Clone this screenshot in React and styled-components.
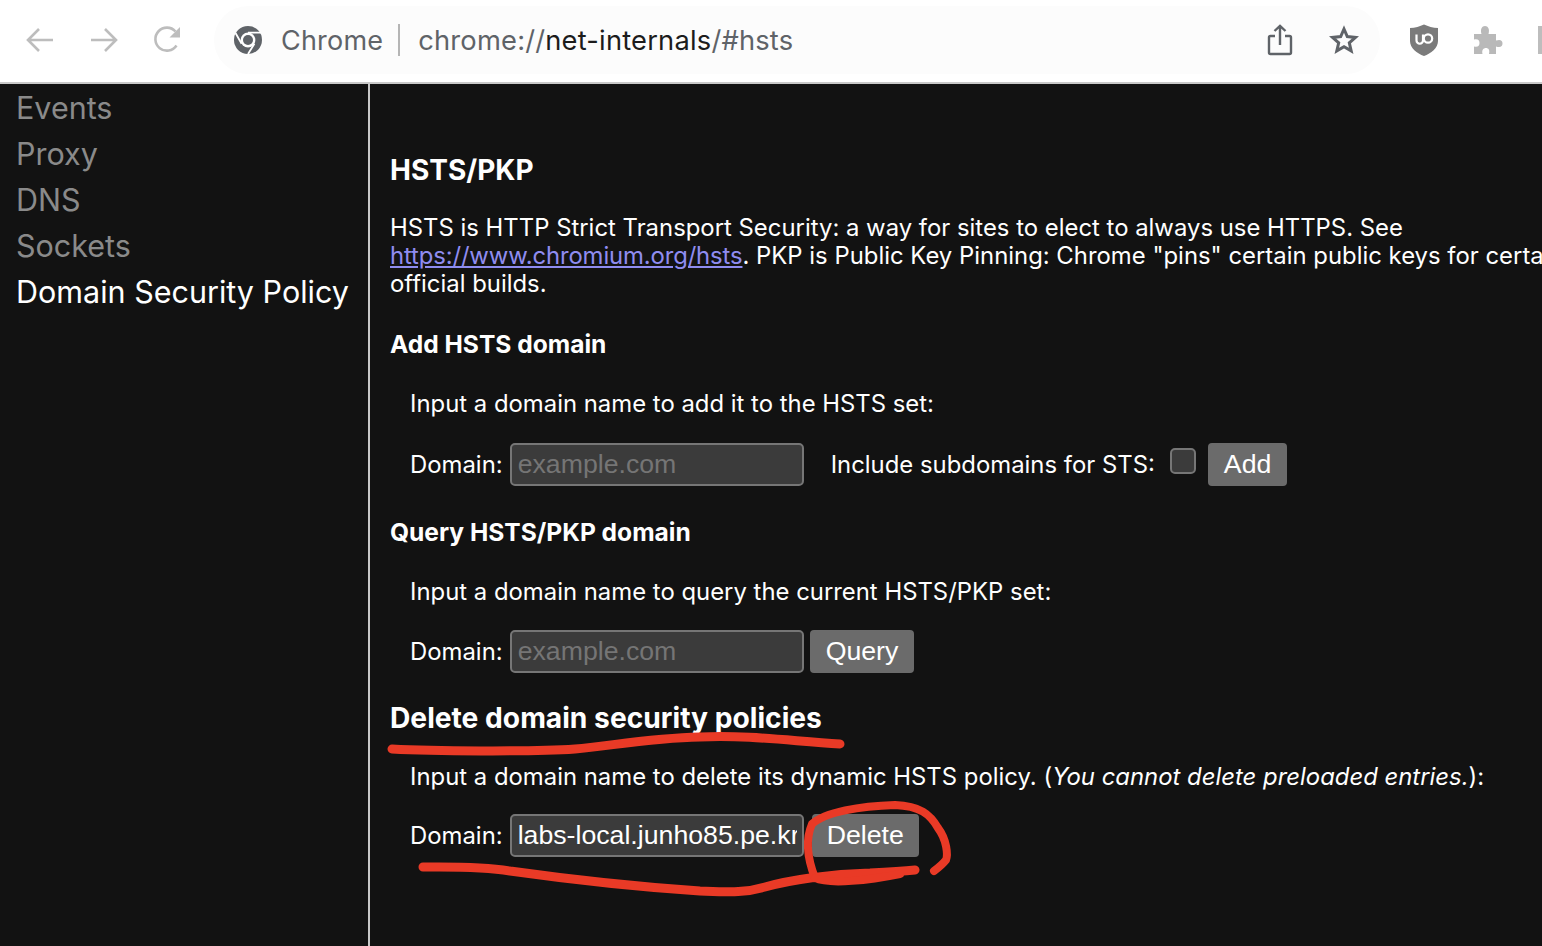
import React from 'react';
import styled, { createGlobalStyle } from 'styled-components';

const GlobalStyle = createGlobalStyle`
  html, body {
    margin: 0;
    padding: 0;
    height: 100%;
    overflow: hidden;
    background: #121212;
  }
`;

const Page = styled.div`
  position: relative;
  height: 946px;
  overflow: hidden;
  display: flex;
  flex-direction: column;
  font-family: Inter, "Liberation Sans", sans-serif;
  color: #fff;
`;

const Toolbar = styled.div`
  height: 84px;
  box-sizing: border-box;
  flex-shrink: 0;
  background: #fff;
  border-bottom: 2px solid #c9c9c9;
  display: flex;
  align-items: center;
  padding: 0 0 2px 24px;
  overflow: hidden;
`;

const NavButton = styled.div`
  width: 32px;
  height: 32px;
  margin-right: 32px;
  display: flex;
  align-items: center;
  justify-content: center;
  flex-shrink: 0;
`;

const Omnibox = styled.div`
  width: 1166px;
  height: 68px;
  margin-left: -2px;
  border-radius: 34px;
  background: #fcfcfc;
  display: flex;
  align-items: center;
  padding-left: 19px;
  box-sizing: border-box;
  flex-shrink: 0;
`;

const SiteName = styled.span`
  font-size: 27px;
  color: #5f6368;
  margin-left: 18px;
  letter-spacing: 0.2px;
`;

const Divider = styled.span`
  width: 2px;
  height: 32px;
  background: #b5b5b5;
  margin: 0 18px 0 15px;
`;

const Url = styled.span`
  font-size: 27.3px;
  color: #5f6368;
  letter-spacing: 0.2px;
  white-space: nowrap;
`;

const UrlStrong = styled.span`
  color: #1c1c1c;
`;

const OmniActions = styled.div`
  margin-left: auto;
  display: flex;
  align-items: center;
  gap: 36px;
  padding-right: 21px;
`;

const Extensions = styled.div`
  display: flex;
  align-items: center;
  gap: 35px;
  margin-left: 30px;
  flex-shrink: 0;
`;

const Main = styled.div`
  flex: 1;
  display: flex;
  min-height: 0;
`;

const Sidebar = styled.nav`
  width: 370px;
  flex-shrink: 0;
  box-sizing: border-box;
  border-right: 2px solid #c8c8c8;
  padding: 1px 0 0 16px;
`;

const NavItem = styled.div`
  font-size: 30.5px;
  line-height: 46px;
  color: ${props => (props.$active ? '#ffffff' : '#8a8a8a')};
  white-space: nowrap;
`;

const Content = styled.main`
  flex: 1;
  padding: 69px 0 0 20px;
  white-space: nowrap;
  min-width: 0;
`;

const Title = styled.h2`
  font-size: 28px;
  line-height: 34px;
  font-weight: 700;
  margin: 0 0 27px;
`;

const Para = styled.p`
  font-size: 23.88px;
  line-height: 28px;
  margin: 0 0 31px;
`;

const Link = styled.a`
  color: #8f8cf0;
  letter-spacing: -0.14px;
  text-decoration: underline;
`;

const SectionTitle = styled.h3`
  font-size: 24.55px;
  line-height: 30px;
  font-weight: 700;
  margin: 0;
`;

const BigSectionTitle = styled.h3`
  font-size: 28.2px;
  line-height: 34px;
  font-weight: 700;
  margin: 0;
`;

const Prompt = styled.div`
  font-size: 23.88px;
  line-height: 28px;
  margin: ${props => props.$top}px 0 0 20px;
`;

const FormRow = styled.div`
  display: flex;
  align-items: center;
  height: 43px;
  margin: ${props => props.$top}px 0 ${props => props.$bottom}px 20px;
`;

const Label = styled.span`
  font-size: 23.88px;
  margin-right: 7px;
`;

const Input = styled.div`
  width: 294px;
  height: 43px;
  box-sizing: border-box;
  border: 2px solid #767676;
  border-radius: 5px;
  background: #3b3b3b;
  padding: 0 5px 0 6px;
  font-size: 26.7px;
  line-height: 38px;
  color: ${props => (props.$filled ? '#ffffff' : '#757575')};
  font-family: "Liberation Sans", Arial, sans-serif;
`;

const InputValue = styled.div`
  overflow: hidden;
  white-space: nowrap;
`;

const Checkbox = styled.span`
  width: 26px;
  height: 26px;
  box-sizing: border-box;
  border: 2px solid #767676;
  border-radius: 5px;
  background: #3b3b3b;
  margin: -8px 0 0 15px;
`;

const Button = styled.button`
  height: 43px;
  box-sizing: border-box;
  border: none;
  border-radius: 4px;
  background: #6b6b6b;
  color: #fff;
  font-family: "Liberation Sans", Arial, sans-serif;
  font-size: 26.7px;
  padding: 0 ${props => props.$pad || 16}px;
  margin-left: ${props => props.$left}px;
`;

const IncludeLabel = styled.span`
  font-size: 23.88px;
  margin-left: 27px;
`;

const Annotations = styled.svg`
  position: absolute;
  left: 0;
  top: 0;
  pointer-events: none;
`;

const Ink = styled.path`
  fill: none;
  stroke: #e93a26;
  stroke-width: ${props => props.$width || 9};
  stroke-linecap: round;
  stroke-linejoin: round;
`;

const Back = () => (
  <svg width="30" height="28" viewBox="0 0 30 28" fill="none" stroke="#bdbdbd" strokeWidth="2.6">
    <path d="M28 14H3M14 3 3 14l11 11" />
  </svg>
);

const Forward = () => (
  <svg width="30" height="28" viewBox="0 0 30 28" fill="none" stroke="#bdbdbd" strokeWidth="2.6">
    <path d="M2 14h25M16 3l11 11-11 11" />
  </svg>
);

const Reload = () => (
  <svg width="30" height="30" viewBox="0 0 30 30" fill="none">
    <path d="M23.5 20.5A11.5 11.5 0 1 1 22.5 6.5" stroke="#bdbdbd" strokeWidth="2.6" />
    <path d="M27 2v10.5H16.5z" fill="#bdbdbd" />
  </svg>
);

const ChromeLogo = () => (
  <svg width="30" height="30" viewBox="0 0 30 30">
    <circle cx="15" cy="15" r="14" fill="#5f6368" />
    <circle cx="15" cy="15" r="7.4" fill="#fff" />
    <circle cx="15" cy="15" r="5" fill="#5f6368" />
    <path d="M15 7.6h13M8.6 18.7 2.5 8M21.4 18.7 15 29" stroke="#fff" strokeWidth="1.8" />
  </svg>
);

const Share = () => (
  <svg width="26" height="32" viewBox="0 0 26 32" fill="none" stroke="#5f6368" strokeWidth="2.4">
    <path d="M8 12H3.5A1.5 1.5 0 0 0 2 13.500V28.500A1.500 1.500 0 0 0 3.500 30H22.500A1.500 1.500 0 0 0 24 28.500V13.500A1.500 1.500 0 0 0 22.500 12H18" />
    <path d="M13 21V2M7.500 7 13 1.800 18.500 7" />
  </svg>
);

const Star = () => (
  <svg width="30" height="30" viewBox="0 0 30 30" fill="none" stroke="#5f6368" strokeWidth="3" strokeLinejoin="miter">
    <path d="M15 4l3.300 7.600 8.200.8-6.200 5.400 1.900 8.100L15 21.700l-7.200 4.200 1.900-8.100-6.200-5.400 8.200-.8z" />
  </svg>
);

const UBlock = () => (
  <svg width="28" height="32" viewBox="0 0 28 32">
    <path d="M14 0.500C18 2.500 23 3.800 28 4V17C28 24 21 29.500 14 32 7 29.500 0 24 0 17V4C5 3.800 10 2.500 14 0.500Z" fill="#7b7b7b" />
    <path d="M6.500 10.500V16.500A3.200 3.200 0 0 0 13 16.500V10.500" fill="none" stroke="#fff" strokeWidth="2.200" />
    <circle cx="18" cy="14.500" r="4.200" fill="none" stroke="#fff" strokeWidth="2.200" />
  </svg>
);

const Puzzle = () => (
  <svg width="30" height="30" viewBox="0 0 30 30" fill="#b9b9b9">
    <path d="M1 9H8.500C7 4 9 1 12 1s5 3 3.500 8H23V15.500C27.500 14 29.500 15.500 29.500 18.500S27.500 23 23 21.500V29H16C17 25 15.500 23 13 23S8.500 25 9.500 29H1V21.500C5 22.500 6.500 20.500 6.500 18S5 13.500 1 14.500Z" />
  </svg>
);

const ProfileEdge = styled.span`
  width: 6px;
  height: 28px;
  background: #bdbdbd;
`;

const App = () => (
  <Page>
    <GlobalStyle />
    <Toolbar>
      <NavButton><Back /></NavButton>
      <NavButton><Forward /></NavButton>
      <NavButton><Reload /></NavButton>
      <Omnibox>
        <ChromeLogo />
        <SiteName>Chrome</SiteName>
        <Divider />
        <Url>chrome://<UrlStrong>net-internals</UrlStrong>/#hsts</Url>
        <OmniActions>
          <Share />
          <Star />
        </OmniActions>
      </Omnibox>
      <Extensions>
        <UBlock />
        <Puzzle />
        <ProfileEdge />
      </Extensions>
    </Toolbar>
    <Main>
      <Sidebar>
        <NavItem>Events</NavItem>
        <NavItem>Proxy</NavItem>
        <NavItem>DNS</NavItem>
        <NavItem>Sockets</NavItem>
        <NavItem $active>Domain Security Policy</NavItem>
      </Sidebar>
      <Content>
        <Title>HSTS/PKP</Title>
        <Para>
          HSTS is HTTP Strict Transport Security: a way for sites to elect to always use HTTPS. See<br />
          <Link href="#hsts">https://www.chromium.org/hsts</Link>. PKP is Public Key Pinning: Chrome "pins" certain public keys for certain hosts in<br />
          official builds.
        </Para>

        <SectionTitle>Add HSTS domain</SectionTitle>
        <Prompt $top={31}>Input a domain name to add it to the HSTS set:</Prompt>
        <FormRow $top={25} $bottom={31}>
          <Label>Domain:</Label>
          <Input><InputValue>example.com</InputValue></Input>
          <IncludeLabel>Include subdomains for STS:</IncludeLabel>
          <Checkbox />
          <Button $left={12}>Add</Button>
        </FormRow>

        <SectionTitle>Query HSTS/PKP domain</SectionTitle>
        <Prompt $top={31}>Input a domain name to query the current HSTS/PKP set:</Prompt>
        <FormRow $top={24} $bottom={28}>
          <Label>Domain:</Label>
          <Input><InputValue>example.com</InputValue></Input>
          <Button $left={6}>Query</Button>
        </FormRow>

        <BigSectionTitle>Delete domain security policies</BigSectionTitle>
        <Prompt $top={28}>
          Input a domain name to delete its dynamic HSTS policy. (<em>You cannot delete preloaded entries.</em>):
        </Prompt>
        <FormRow $top={23} $bottom={0}>
          <Label>Domain:</Label>
          <Input $filled><InputValue>labs-local.junho85.pe.kr</InputValue></Input>
          <Button $left={8} $pad={15}>Delete</Button>
        </FormRow>
      </Content>
    </Main>
    <Annotations width="1542" height="946" viewBox="0 0 1542 946">
      <Ink d="M392 749C430 751 530 752 575 749C610 746 650 738 700 737C750 735 790 741 840 744" />
      <Ink d="M423 867C445 867 480 866 510 871C560 878 640 887 700 891C730 892 745 893 765 887C790 880 830 874 870 873C890 872 905 871 915 870" />
      <Ink $width={8} d="M815 878C808 860 805 840 812 824C825 812 860 806 895 805C920 806 930 814 938 828C947 840 948 855 946 860C942 865 938 868 934 871" />
      <Ink $width={8} d="M815 878C830 885 870 880 900 874" />
    </Annotations>
  </Page>
);

export default App;
